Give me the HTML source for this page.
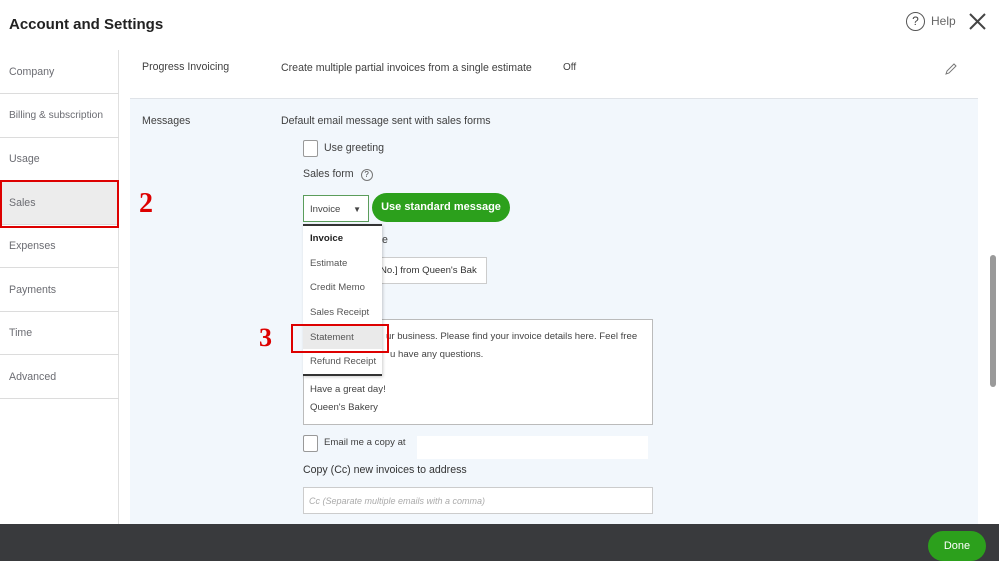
<!DOCTYPE html>
<html><head><style>
*{margin:0;padding:0;box-sizing:border-box}
body{width:999px;height:562px;overflow:hidden;background:#fff;font-family:"Liberation Sans",sans-serif;position:relative;color:#393a3d}
.a{position:absolute}
.t{font-size:10.6px;color:#404040}
.side{left:0;width:119px;border-right:1px solid #e0e0e0;top:50px;height:474px}
.si{position:absolute;left:0;width:119px;height:44px;border-bottom:1px solid #dcdcdc;font-size:10.6px;color:#6b6c72;padding:16px 0 0 9px}
.dd div{height:24.7px;padding:7px 0 0 7px;font-size:9.6px;color:#555}
</style></head><body>
<div class="a" style="left:9px;top:16px;font-size:15px;font-weight:bold;color:#222">Account and Settings</div>
<div class="a" style="left:906px;top:12px;width:19px;height:19px;border:1.5px solid #555;border-radius:50%;font-size:12px;text-align:center;line-height:16px;color:#444">?</div>
<div class="a" style="left:931px;top:14px;font-size:12px;color:#666">Help</div>
<svg class="a" style="left:968px;top:12px" width="19" height="19"><path d="M2 2L17 17M17 2L2 17" stroke="#444" stroke-width="2"/></svg>
<div class="a side">
<div class="si" style="top:0">Company</div>
<div class="si" style="top:44px;font-size:10.2px">Billing &amp; subscription</div>
<div class="si" style="top:87px">Usage</div>
<div class="si" style="top:131px;background:#ececec">Sales</div>
<div class="si" style="top:174px">Expenses</div>
<div class="si" style="top:218px">Payments</div>
<div class="si" style="top:261px">Time</div>
<div class="si" style="top:305px">Advanced</div>
</div>
<div class="a" style="left:0;top:180px;width:119px;height:48px;border:2px solid #d00"></div>
<div class="a t" style="left:142px;top:61px">Progress Invoicing</div>
<div class="a t" style="left:281px;top:62px">Create multiple partial invoices from a single estimate</div>
<div class="a t" style="left:563px;top:62px;font-size:10px">Off</div>
<svg class="a" style="left:944px;top:62px" width="14" height="14"><path d="M2 12L3 9L10 2L12 4L5 11Z" fill="none" stroke="#777"/></svg>
<div class="a" style="left:130px;top:98px;width:848px;height:426px;background:#f2f7fc;border-top:1px solid #dfe3e8"></div>
<div class="a" style="left:139px;top:188px;font-family:'Liberation Serif',serif;font-weight:bold;font-size:28px;color:#d00">2</div>
<div class="a t" style="left:142px;top:115px">Messages</div>
<div class="a t" style="left:281px;top:115px">Default email message sent with sales forms</div>
<div class="a" style="left:303px;top:140px;width:15px;height:17px;border:1px solid #999;border-radius:2px;background:#fff"></div>
<div class="a t" style="left:324px;top:142px">Use greeting</div>
<div class="a t" style="left:303px;top:168px">Sales form <span style="display:inline-block;width:12px;height:12px;border:1px solid #777;border-radius:50%;font-size:8px;text-align:center;line-height:10px;margin-left:4px">?</span></div>
<div class="a" style="left:303px;top:195px;width:66px;height:27px;border:1px solid #5b9d5b;background:#fff;font-size:9.6px;color:#444;padding:8px 0 0 6px">Invoice <span style="margin-left:10px;font-size:8px">▼</span></div>
<div class="a" style="left:372px;top:193px;width:138px;height:29px;background:#2ca01c;border-radius:15px;color:#fff;font-weight:bold;font-size:11px;text-align:center;line-height:29px">Use standard message</div>
<div class="a t" style="left:382px;top:234px">e</div>
<div class="a" style="left:375px;top:257px;width:112px;height:27px;border:1px solid #ccc;background:#fff;font-size:9.6px;color:#333;padding:7px 0 0 4px;overflow:hidden;white-space:nowrap">No.] from Queen's Bak</div>
<div class="a" style="left:303px;top:319px;width:350px;height:106px;border:1px solid #bbb;background:#fff;font-size:9.6px;color:#444;line-height:18px;padding:8px 0 0 6px;white-space:nowrap;overflow:hidden">
<div style="padding-left:76px">ur business. Please find your invoice details here. Feel free</div>
<div style="padding-left:80px">u have any questions.</div>
<div style="margin-top:17px">Have a great day!</div><div>Queen's Bakery</div></div>
<div class="a dd" style="left:303px;top:224px;width:79px;height:152px;background:#fff;border-top:2px solid #333;border-bottom:2px solid #333;box-shadow:1px 1px 3px rgba(0,0,0,.2)">
<div style="color:#222;font-weight:bold">Invoice</div><div>Estimate</div><div>Credit Memo</div><div>Sales Receipt</div><div style="background:#eaeaea">Statement</div><div>Refund Receipt</div></div>
<div class="a" style="left:291px;top:324px;width:98px;height:29px;border:2.5px solid #d00"></div>
<div class="a" style="left:259px;top:323px;font-family:'Liberation Serif',serif;font-weight:bold;font-size:26px;color:#d00">3</div>
<div class="a" style="left:303px;top:435px;width:15px;height:17px;border:1px solid #999;border-radius:2px;background:#fff"></div>
<div class="a t" style="left:324px;top:437px;font-size:9.6px">Email me a copy at</div>
<div class="a" style="left:417px;top:436px;width:231px;height:23px;background:#fff"></div>
<div class="a t" style="left:303px;top:464px;font-size:10.6px;color:#333">Copy (Cc) new invoices to address</div>
<div class="a" style="left:303px;top:487px;width:350px;height:27px;border:1px solid #ccc;background:#fff;font-size:9px;font-style:italic;color:#aaa;padding:8px 0 0 5px">Cc (Separate multiple emails with a comma)</div>
<div class="a" style="left:990px;top:255px;width:6px;height:132px;background:#9a9a9a;border-radius:3px"></div>
<div class="a" style="left:0;top:524px;width:999px;height:37px;background:#393a3d"></div>
<div class="a" style="left:928px;top:531px;width:58px;height:30px;background:#2ca01c;border-radius:15px;color:#fff;font-size:11px;text-align:center;line-height:30px">Done</div>
</body></html>
